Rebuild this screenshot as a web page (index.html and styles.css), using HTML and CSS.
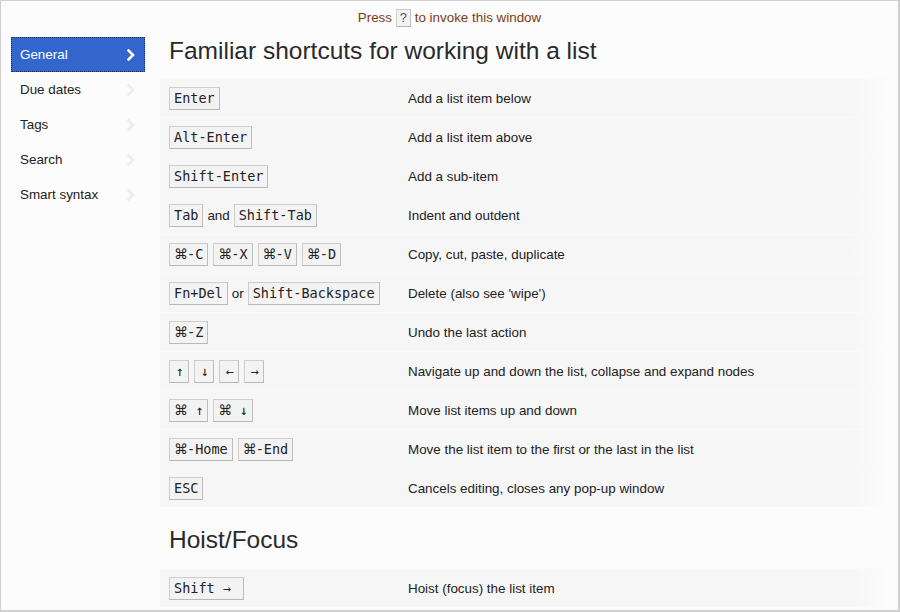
FILE: index.html
```html
<!DOCTYPE html>
<html>
<head>
<meta charset="utf-8">
<link rel="stylesheet" href="styles.css">
</head>
<body>
<div class="window">
  <p class="hint">Press <span class="k k-small">?</span> to invoke this window</p>
  <div class="layout">
    <nav class="sidebar">
      <div class="nav-item active">General<svg class="chev" viewBox="0 0 8 12" width="8" height="12"><polyline points="1.5,1.5 6,6 1.5,10.5" /></svg></div>
      <div class="nav-item">Due dates<svg class="chev" viewBox="0 0 8 12" width="8" height="12"><polyline points="1.5,1.5 6,6 1.5,10.5" /></svg></div>
      <div class="nav-item">Tags<svg class="chev" viewBox="0 0 8 12" width="8" height="12"><polyline points="1.5,1.5 6,6 1.5,10.5" /></svg></div>
      <div class="nav-item">Search<svg class="chev" viewBox="0 0 8 12" width="8" height="12"><polyline points="1.5,1.5 6,6 1.5,10.5" /></svg></div>
      <div class="nav-item">Smart syntax<svg class="chev" viewBox="0 0 8 12" width="8" height="12"><polyline points="1.5,1.5 6,6 1.5,10.5" /></svg></div>
    </nav>
    <main class="content">
      <h1 class="title">Familiar shortcuts for working with a list</h1>
      <div class="rows">
        <div class="row"><div class="keys"><span class="k">Enter</span></div><div class="desc">Add a list item below</div></div>
        <div class="row"><div class="keys"><span class="k">Alt-Enter</span></div><div class="desc">Add a list item above</div></div>
        <div class="row"><div class="keys"><span class="k">Shift-Enter</span></div><div class="desc">Add a sub-item</div></div>
        <div class="row"><div class="keys"><span class="k">Tab</span><span class="conj">and</span><span class="k">Shift-Tab</span></div><div class="desc">Indent and outdent</div></div>
        <div class="row"><div class="keys"><span class="k"><span class="cmd">⌘</span>-C</span><span class="k"><span class="cmd">⌘</span>-X</span><span class="k"><span class="cmd">⌘</span>-V</span><span class="k"><span class="cmd">⌘</span>-D</span></div><div class="desc">Copy, cut, paste, duplicate</div></div>
        <div class="row"><div class="keys"><span class="k">Fn+Del</span><span class="conj">or</span><span class="k">Shift-Backspace</span></div><div class="desc">Delete (also see 'wipe')</div></div>
        <div class="row"><div class="keys"><span class="k"><span class="cmd">⌘</span>-Z</span></div><div class="desc">Undo the last action</div></div>
        <div class="row"><div class="keys"><span class="k arrow">↑</span><span class="k arrow">↓</span><span class="k arrow">←</span><span class="k arrow">→</span></div><div class="desc">Navigate up and down the list, collapse and expand nodes</div></div>
        <div class="row"><div class="keys"><span class="k"><span class="cmd">⌘</span> ↑</span><span class="k"><span class="cmd">⌘</span> ↓</span></div><div class="desc">Move list items up and down</div></div>
        <div class="row"><div class="keys"><span class="k"><span class="cmd">⌘</span>-Home</span><span class="k"><span class="cmd">⌘</span>-End</span></div><div class="desc">Move the list item to the first or the last in the list</div></div>
        <div class="row"><div class="keys"><span class="k">ESC</span></div><div class="desc">Cancels editing, closes any pop-up window</div></div>
      </div>
      <h2 class="title sub">Hoist/Focus</h2>
      <div class="rows">
        <div class="row"><div class="keys"><span class="k">Shift →&nbsp;</span></div><div class="desc">Hoist (focus) the list item</div></div>
      </div>
    </main>
  </div>
</div>
</body>
</html>
```

FILE: styles.css
```css
html, body {
  margin: 0;
  padding: 0;
  background: #fcfcfc;
}

.window {
  width: 900px;
  height: 612px;
  box-sizing: border-box;
  border: 1px solid #cfcfcf;
  border-right-width: 2px;
  border-bottom-width: 2px;
  background: #fcfcfc;
  overflow: hidden;
  font-family: "Liberation Sans", Arial, sans-serif;
  color: #222;
}

.hint {
  margin: 0;
  height: 35px;
  padding-top: 7px;
  box-sizing: border-box;
  text-align: center;
  font-size: 13.4px;
  line-height: 20px;
  color: #7b3b14;
}

.k {
  display: inline-block;
  font-family: "DejaVu Sans Mono", "Liberation Mono", monospace;
  font-size: 13.5px;
  line-height: 21px;
  padding: 0 4px;
  background: #f3f3f3;
  border: 1px solid #cdcdcd;
  border-right-color: #bdbdbd;
  border-bottom-color: #b8b8b8;
  color: #222;
  white-space: pre;
}

.k.arrow {
  min-width: 9px;
  text-align: center;
  padding: 0 4px 0 5px;
}

.cmd {
  display: inline-block;
  width: 13px;
  text-align: center;
  font-family: "DejaVu Sans", sans-serif;
  font-size: 14px;
}

.k-small {
  font-family: "Liberation Sans", Arial, sans-serif;
  font-size: 13px;
  line-height: 16px;
  padding: 0 3px;
  color: #555;
}

.layout {
  display: flex;
}

.sidebar {
  margin-left: 10px;
  margin-top: 1px;
  width: 134px;
  display: flex;
  flex-direction: column;
}

.nav-item {
  height: 35px;
  box-sizing: border-box;
  display: flex;
  align-items: center;
  justify-content: space-between;
  padding: 0 9px 0 8px;
  font-size: 13.4px;
  color: #222;
  border: 1px solid transparent;
}

.nav-item.active {
  background: #3366cc;
  color: #fff;
  border: 1px dotted #1c2f66;
}

.chev polyline {
  fill: none;
  stroke: #ececec;
  stroke-width: 2.6;
  stroke-linecap: square;
}

.nav-item.active .chev polyline {
  stroke: #fff;
}

.content {
  margin-left: 15px;
  width: 728px;
}

.title {
  margin: 0;
  padding-left: 9px;
  font-weight: normal;
  font-size: 24.5px;
  line-height: 30px;
  height: 42px;
  color: #2a2a2a;
}

.title.sub {
  height: 60px;
  line-height: 64px;
  margin-top: 1px;
}

.rows {
  display: flex;
  flex-direction: column;
}

.row {
  height: 39px;
  box-sizing: border-box;
  display: flex;
  align-items: center;
  padding-left: 9px;
  background: linear-gradient(to right, #f6f6f6 0, #f6f6f6 690px, rgba(246,246,246,0) 728px);
  border-top: 1px solid #fafafa;
}

.keys {
  width: 239px;
  display: flex;
  align-items: center;
  gap: 5px;
}

.conj {
  font-size: 13.4px;
  margin: 0 -1px;
}

.desc {
  font-size: 13.4px;
  color: #222;
}
```
